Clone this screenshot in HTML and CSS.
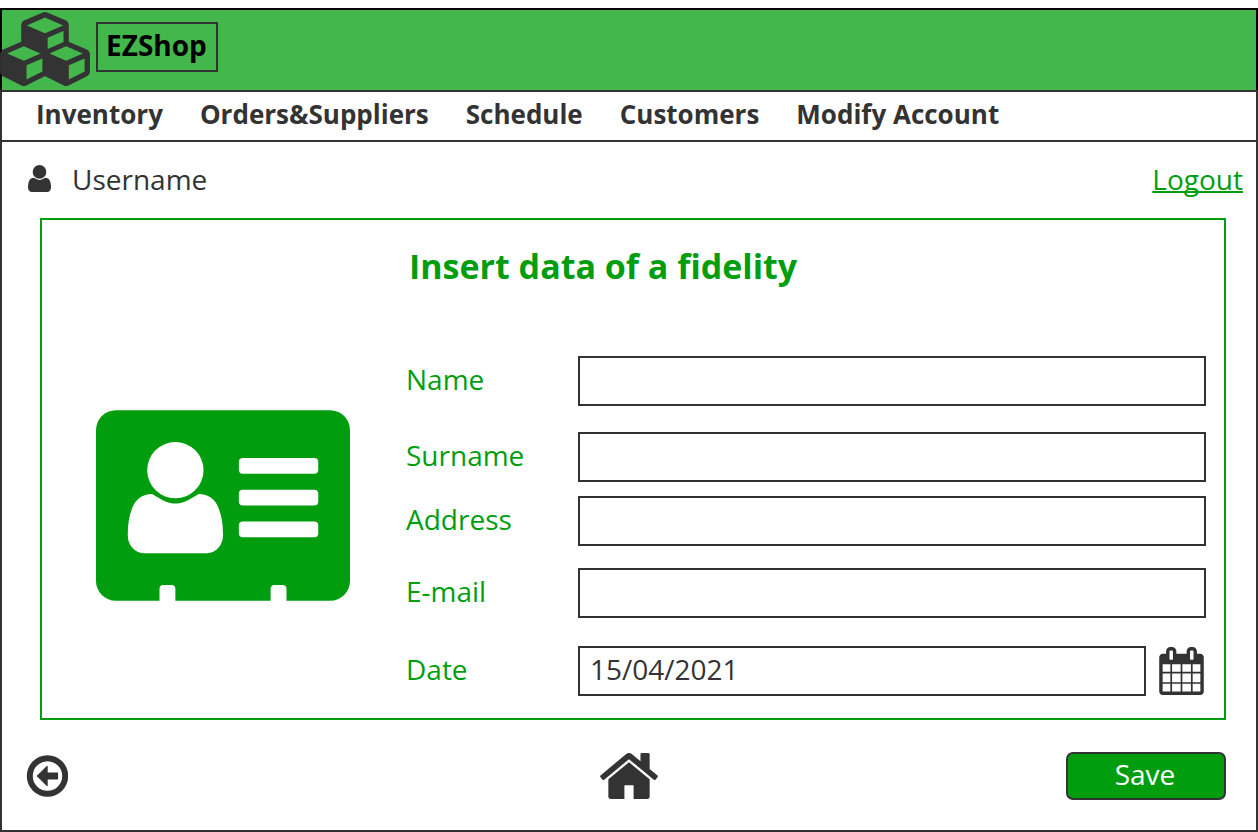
FILE: index.html
```html
<!DOCTYPE html>
<html lang="en">
<head>
<meta charset="utf-8">
<meta name="viewport" content="width=device-width, initial-scale=1">
<title>EZShop</title>
<link rel="stylesheet" href="styles.css">
</head>
<body>
<div class="app">
  <header class="header">
    <svg class="logo" viewBox="0 0 2176 1792" aria-hidden="true"><path d="M640 1632l384-192v-314l-384 164v342zM576 1178l404-173-404-173-404 173zM1664 1632l384-192v-314l-384 164v342zM1600 1178l404-173-404-173-404 173zM1152 893l384-165v-266l-384 164v267zM1088 514l441-189-441-189-441 189zM2176 1024v416q0 36-19 67t-52 47l-448 224q-25 14-57 14t-57-14l-448-224q-4-2-7-4-2 2-7 4l-448 224q-25 14-57 14t-57-14l-448-224q-33-16-52-47t-19-67v-416q0-38 21.500-70t56.500-48l434-186v-400q0-38 21.500-70t56.500-48l448-192q23-10 50-10t50 10l448 192q35 16 56.500 48t21.500 70v400l434 186q36 16 57 48t21 70z"/></svg>
    <div class="brand">EZShop</div>
  </header>
  <nav class="nav" aria-label="Main">
    <a href="#inventory">Inventory</a>
    <a href="#orders">Orders&amp;Suppliers</a>
    <a href="#schedule">Schedule</a>
    <a href="#customers">Customers</a>
    <a href="#account">Modify Account</a>
  </nav>
  <div class="content">
    <div class="userbar">
      <svg class="user-icon" viewBox="256 256 768 896" aria-hidden="true"><circle cx="640" cy="483" r="227"/><path d="M1024 1003q0 64-37 106.500t-91 42.500h-512q-54 0-91-42.500t-37-106.500 9-117.500 29.500-103 60.500-78 97-28.500q6 4 30 18t37.500 21.500 35.500 17.500 43 14.500 42 4.500 42-4.500 43-14.500 35.500-17.500 37.500-21.500 30-18q57 0 97 28.500t60.500 78 29.500 103 9 117.500z"/></svg>
      <span class="username">Username</span>
      <a class="logout" href="#logout">Logout</a>
    </div>
    <main class="panel">
      <div class="card-side">
        <svg class="card-icon" viewBox="0 0 2048 1536" aria-hidden="true"><path fill-rule="evenodd" d="M160 0H1888A160 160 0 0 1 2048 160V1376A160 160 0 0 1 1888 1536H1536V1440Q1536 1408 1504 1408H1440Q1408 1408 1408 1440V1536H640V1440Q640 1408 608 1408H544Q512 1408 512 1440V1536H160A160 160 0 0 1 0 1376V160A160 160 0 0 1 160 0Z"/><g class="card-cutout"><circle cx="640" cy="483" r="227"/><path d="M1024 1003q0 64-37 106.500t-91 42.500h-512q-54 0-91-42.500t-37-106.500 9-117.500 29.500-103 60.500-78 97-28.500q6 4 30 18t37.500 21.500 35.500 17.500 43 14.500 42 4.500 42-4.500 43-14.500 35.500-17.500 37.500-21.500 30-18q57 0 97 28.500t60.500 78 29.500 103 9 117.500z"/><rect x="1152" y="384" width="640" height="128" rx="32"/><rect x="1152" y="640" width="640" height="128" rx="32"/><rect x="1152" y="896" width="640" height="128" rx="32"/></g></svg>
      </div>
      <form class="form" id="fidelity">
        <h1 class="title">Insert data of a fidelity</h1>
        <div class="row"><label for="name">Name</label><input id="name" type="text"></div>
        <div class="row row-surname"><label for="surname">Surname</label><input id="surname" type="text"></div>
        <div class="row row-address"><label for="address">Address</label><input id="address" type="text"></div>
        <div class="row row-email"><label for="email">E-mail</label><input id="email" type="email"></div>
        <div class="row row-date"><label for="date">Date</label><input id="date" type="text" value="15/04/2021"><button class="icon-button calendar" type="button" aria-label="Choose date"><svg viewBox="0 0 1664 1792" aria-hidden="true"><path d="M128 1664h288v-288h-288v288zM480 1664h320v-288h-320v288zM128 1312h288v-320h-288v320zM480 1312h320v-320h-320v320zM128 928h288v-288h-288v288zM864 1664h320v-288h-320v288zM480 928h320v-288h-320v288zM1248 1664h288v-288h-288v288zM864 1312h320v-320h-320v320zM512 448v-288q0-13-9.500-22.500t-22.500-9.500h-64q-13 0-22.500 9.500t-9.500 22.500v288q0 13 9.500 22.500t22.500 9.500h64q13 0 22.500-9.500t9.500-22.500zM1248 1312h288v-320h-288v320zM864 928h320v-288h-320v288zM1248 928h288v-288h-288v288zM1280 448v-288q0-13-9.500-22.500t-22.500-9.500h-64q-13 0-22.500 9.500t-9.500 22.500v288q0 13 9.500 22.500t22.500 9.500h64q13 0 22.500-9.500t9.500-22.500zM1664 384v1280q0 52-38 90t-90 38h-1408q-52 0-90-38t-38-90v-1280q0-52 38-90t90-38h128v-96q0-66 47-113t113-47h64q66 0 113 47t47 113v96h384v-96q0-66 47-113t113-47h64q66 0 113 47t47 113v96h128q52 0 90 38t38 90z"/></svg></button></div>
      </form>
    </main>
    <footer class="footer">
      <button class="icon-button back" type="button" aria-label="Back"><svg viewBox="0 0 42 42" aria-hidden="true"><circle class="ring" cx="21.500" cy="21" r="17.700"/><path d="M10.800 21.300Q10.500 21 10.800 20.700L20.800 10.900Q21.700 10.300 21.700 11.400V17.600H31.500Q32.100 17.600 32.100 18.200V23.800Q32.100 24.400 31.500 24.400H21.700V30.600Q21.700 31.700 20.800 31.100Z"/></svg></button>
      <a class="home" href="#home" aria-label="Home"><svg viewBox="25 253 1614 1283" aria-hidden="true"><path d="M1408 992v480q0 26-19 45t-45 19h-384v-384h-256v384h-384q-26 0-45-19t-19-45v-480q0-1 .5-3t.5-3l575-474 575 474q1 2 1 6zM1631 923l-62 74q-8 9-21 11h-3q-13 0-21-7l-692-577-692 577q-12 8-24 7-13-2-21-11l-62-74q-8-10-7-23.500t11-21.500l719-599q32-26 76-26t76 26l244 204v-195q0-14 9-23t23-9h192q14 0 23 9t9 23v408l219 182q10 8 11 21.500t-7 23.500z"/></svg></a>
      <button class="save" type="submit" form="fidelity">Save</button>
    </footer>
  </div>
</div>
</body>
</html>
```
FILE: styles.css
```css
:root {
  --ink: #333333;
  --green: #009e0f;
  --header: #43b74b;
}

* {
  box-sizing: border-box;
}

body {
  margin: 8px 0 0;
  background: #ffffff;
  color: var(--ink);
  font-family: "Open Sans", "Noto Sans", sans-serif;
  font-size: 28px;
  line-height: 38px;
}

svg {
  display: block;
  fill: currentColor;
}

.app {
  display: flex;
  flex-direction: column;
  min-height: calc(100vh - 8px);
}

.header {
  display: flex;
  align-items: flex-start;
  gap: 6px;
  height: 82px;
  border: 2px solid #000000;
  border-bottom: 0;
  background: var(--header);
}

.logo {
  width: 90px;
  height: 74px;
  margin: 2px 0 0 -2px;
}

.brand {
  height: 50px;
  margin-top: 12px;
  padding: 2px 9px 2px 8px;
  border: 2px solid var(--ink);
  color: #000000;
  font-weight: 700;
}

.nav {
  display: flex;
  gap: 37px;
  height: 52px;
  padding: 3px 34px;
  border: 2px solid var(--ink);
  font-size: 26px;
  font-weight: 700;
}

.nav a {
  color: inherit;
  text-decoration: none;
  white-space: nowrap;
}

.content {
  display: flex;
  flex-direction: column;
  flex: 1;
  border: 2px solid var(--ink);
  border-top: 0;
}

.userbar {
  display: flex;
  align-items: center;
  height: 76px;
  padding: 0 13px 2px 26px;
}

.user-icon {
  width: 23px;
  height: 27px;
  margin-bottom: 2px;
}

.username {
  margin-left: 21px;
}

.logout {
  margin-left: auto;
  color: var(--green);
  text-decoration: underline;
  text-decoration-thickness: 2px;
  text-decoration-skip-ink: none;
}

.panel {
  display: grid;
  grid-template-columns: 364px 1fr;
  flex: 1;
  margin: 0 30px 0 38px;
  padding: 23px 18px 22px 0;
  border: 2px solid var(--green);
  color: var(--green);
}

.card-side {
  display: flex;
  justify-content: center;
  padding: 167px 2px 0 0;
}

.card-icon {
  width: 254px;
  height: 191px;
}

.card-cutout {
  fill: #ffffff;
}

.title {
  margin: 0 0 67px;
  padding-left: 3px;
  font-size: 34px;
  line-height: 46px;
}

.row {
  display: grid;
  grid-template-columns: 172px 1fr;
  height: 50px;
}

.row label {
  padding-top: 4px;
}

.row input {
  min-width: 0;
  width: 100%;
  height: 50px;
  padding: 0 10px 4px;
  border: 2px solid var(--ink);
  border-radius: 0;
  background: #ffffff;
  color: var(--ink);
  font: inherit;
}

.row-surname {
  margin-top: 26px;
}

.row-address {
  margin-top: 14px;
}

.row-email {
  margin-top: 22px;
}

.row-date {
  grid-template-columns: 172px 1fr 60px;
  margin-top: 28px;
}

.icon-button {
  padding: 0;
  border: 0;
  background: none;
  color: var(--ink);
  cursor: pointer;
}

.calendar {
  justify-self: end;
  padding-right: 2px;
}

.calendar svg {
  width: 45px;
  height: 48px;
}

.footer {
  display: grid;
  grid-template-columns: 1fr auto 1fr;
  align-items: center;
  height: 110px;
  padding: 2px 24px 0;
}

.back {
  justify-self: start;
}

.back svg {
  width: 42px;
  height: 42px;
}

.ring {
  fill: none;
  stroke: currentColor;
  stroke-width: 6;
}

.home {
  color: var(--ink);
}

.home svg {
  width: 58px;
  height: 46px;
}

.save {
  justify-self: end;
  width: 160px;
  height: 48px;
  margin-right: 6px;
  padding: 0 2px 4px 0;
  border: 2px solid var(--ink);
  border-radius: 7px;
  background: var(--green);
  color: #ffffff;
  font: inherit;
  cursor: pointer;
}
```
